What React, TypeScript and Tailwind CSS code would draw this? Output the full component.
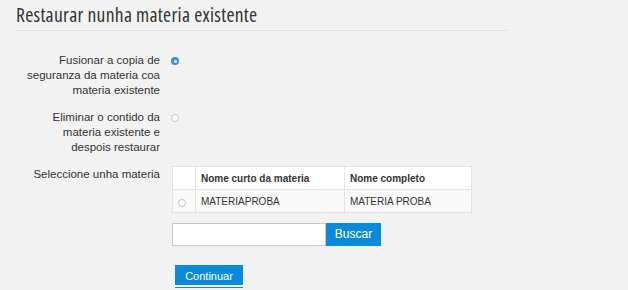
import React from "react";

function Radio({ checked }: { checked?: boolean }) {
  return checked ? (
    <span className="flex h-[8px] w-[8px] items-center justify-center rounded-full bg-[#3a8ef0]">
      <span className="h-[3px] w-[3px] rounded-full bg-white" />
    </span>
  ) : (
    <span className="block h-[8px] w-[8px] rounded-full border border-[#c4c4c4] bg-white" />
  );
}

export default function App() {
  return (
    <div className="min-h-[290px] w-[628px] bg-[#f2f2f2] text-[#333] [font-family:'Liberation_Sans',Arial,sans-serif]">
      <div className="px-[16px] pt-[3px]">
        <h2 className="w-[491px] border-b border-[#dedede] pb-[3px] text-[19.5px] leading-[24px] font-normal tracking-[0.3px] font-stretch-condensed text-[#333] [font-family:'Open_Sans',sans-serif]">
          Restaurar nunha materia existente
        </h2>
      </div>

      <div className="mt-[22px] flex flex-col text-[11.5px] leading-[15px]">
        <div className="flex">
          <div className="w-[160px] pl-[22px] text-right">
            Fusionar a copia de seguranza da materia coa materia existente
          </div>
          <div className="ml-[11px] flex pt-[4px]">
            <Radio checked />
          </div>
        </div>

        <div className="mt-[12px] flex">
          <div className="w-[160px] pl-[22px] text-right">
            Eliminar o contido da materia existente e despois restaurar
          </div>
          <div className="ml-[11px] flex pt-[4px]">
            <Radio />
          </div>
        </div>

        <div className="mt-[11px] flex">
          <div className="w-[160px] pt-[1px] text-right">Seleccione unha materia</div>
          <div className="ml-[12px] flex flex-col">
            <table className="w-[300px] border-collapse border border-[#e3e3e3] text-[10px]">
              <thead>
                <tr className="h-[23px] bg-white">
                  <th className="w-[23px] border border-[#e3e3e3]" />
                  <th className="w-[149px] border border-[#e3e3e3] pl-[5px] text-left font-bold">
                    Nome curto da materia
                  </th>
                  <th className="border border-[#e3e3e3] pl-[5px] text-left font-bold">Nome completo</th>
                </tr>
              </thead>
              <tbody>
                <tr className="h-[23px] bg-[#f9f9f9]">
                  <td className="border border-[#e3e3e3] pl-[5px]">
                    <span className="mt-[3px] flex">
                      <Radio />
                    </span>
                  </td>
                  <td className="border border-[#e3e3e3] pl-[5px]">MATERIAPROBA</td>
                  <td className="border border-[#e3e3e3] pl-[5px]">MATERIA PROBA</td>
                </tr>
              </tbody>
            </table>

            <div className="mt-[10px] flex">
              <input
                type="text"
                className="h-[23px] w-[154px] border border-[#c8c8c8] bg-white px-[4px] text-[11px] outline-none"
              />
              <button className="h-[23px] w-[55px] bg-[#0a8ad9] text-[12px] text-white">Buscar</button>
            </div>

            <div className="mt-[19px] pl-[3px]">
              <button className="h-[23px] w-[68px] bg-[#0a8ad9] text-[11px] text-white shadow-[inset_0_-1px_0_#0a8ad9,inset_0_-3px_0_#ffffff]">
                Continuar
              </button>
            </div>
          </div>
        </div>
      </div>
    </div>
  );
}
